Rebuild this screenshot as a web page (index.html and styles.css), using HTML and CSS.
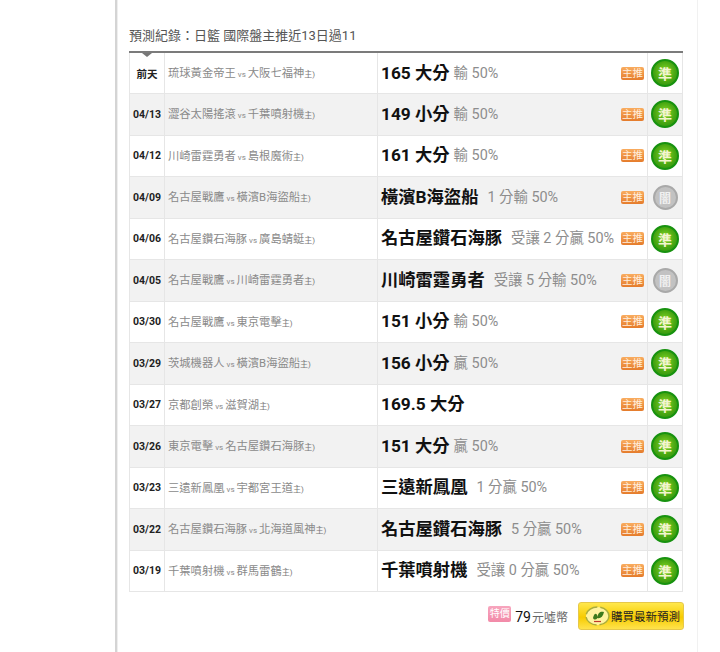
FILE: index.html
```html
<!DOCTYPE html>
<html lang="zh-Hant">
<head>
<meta charset="utf-8">
<title>預測紀錄</title>
<link rel="stylesheet" href="styles.css">
</head>
<body>
<main class="panel">
  <h2 class="title">預測紀錄：日籃 國際盤主推近13日過11</h2>
  <div class="table-wrap">
    <span class="pointer"></span>
    <table class="records">
      <colgroup><col class="c-date"><col class="c-match"><col class="c-pick"><col class="c-res"></colgroup>
      <tbody>
        <tr><td class="date">前天</td><td class="match">琉球黃金帝王<small>vs</small>大阪七福神<small>主)</small></td><td><div class="pick"><b class="num">165 大分</b><span class="odds">輸 50%</span><span class="tag">主推</span></div></td><td class="res"><span class="dot win">準</span></td></tr>
        <tr><td class="date">04/13</td><td class="match">澀谷太陽搖滾<small>vs</small>千葉噴射機<small>主)</small></td><td><div class="pick"><b class="num">149 小分</b><span class="odds">輸 50%</span><span class="tag">主推</span></div></td><td class="res"><span class="dot win">準</span></td></tr>
        <tr><td class="date">04/12</td><td class="match">川崎雷霆勇者<small>vs</small>島根魔術<small>主)</small></td><td><div class="pick"><b class="num">161 大分</b><span class="odds">輸 50%</span><span class="tag">主推</span></div></td><td class="res"><span class="dot win">準</span></td></tr>
        <tr><td class="date">04/09</td><td class="match">名古屋戰鷹<small>vs</small>橫濱B海盜船<small>主)</small></td><td><div class="pick"><b>橫濱B海盜船</b><span class="odds wide">1 分輸 50%</span><span class="tag">主推</span></div></td><td class="res"><span class="dot lose">闇</span></td></tr>
        <tr><td class="date">04/06</td><td class="match">名古屋鑽石海豚<small>vs</small>廣島蜻蜓<small>主)</small></td><td><div class="pick"><b>名古屋鑽石海豚</b><span class="odds wide">受讓 2 分贏 50%</span><span class="tag">主推</span></div></td><td class="res"><span class="dot win">準</span></td></tr>
        <tr><td class="date">04/05</td><td class="match">名古屋戰鷹<small>vs</small>川崎雷霆勇者<small>主)</small></td><td><div class="pick"><b>川崎雷霆勇者</b><span class="odds wide">受讓 5 分輸 50%</span><span class="tag">主推</span></div></td><td class="res"><span class="dot lose">闇</span></td></tr>
        <tr><td class="date">03/30</td><td class="match">名古屋戰鷹<small>vs</small>東京電擊<small>主)</small></td><td><div class="pick"><b class="num">151 小分</b><span class="odds">輸 50%</span><span class="tag">主推</span></div></td><td class="res"><span class="dot win">準</span></td></tr>
        <tr><td class="date">03/29</td><td class="match">茨城機器人<small>vs</small>橫濱B海盜船<small>主)</small></td><td><div class="pick"><b class="num">156 小分</b><span class="odds">贏 50%</span><span class="tag">主推</span></div></td><td class="res"><span class="dot win">準</span></td></tr>
        <tr><td class="date">03/27</td><td class="match">京都創榮<small>vs</small>滋賀湖<small>主)</small></td><td><div class="pick"><b class="num">169.5 大分</b><span class="tag">主推</span></div></td><td class="res"><span class="dot win">準</span></td></tr>
        <tr><td class="date">03/26</td><td class="match">東京電擊<small>vs</small>名古屋鑽石海豚<small>主)</small></td><td><div class="pick"><b class="num">151 大分</b><span class="odds">贏 50%</span><span class="tag">主推</span></div></td><td class="res"><span class="dot win">準</span></td></tr>
        <tr><td class="date">03/23</td><td class="match">三遠新鳳凰<small>vs</small>宇都宮王道<small>主)</small></td><td><div class="pick"><b>三遠新鳳凰</b><span class="odds wide">1 分贏 50%</span><span class="tag">主推</span></div></td><td class="res"><span class="dot win">準</span></td></tr>
        <tr><td class="date">03/22</td><td class="match">名古屋鑽石海豚<small>vs</small>北海道風神<small>主)</small></td><td><div class="pick"><b>名古屋鑽石海豚</b><span class="odds wide">5 分贏 50%</span><span class="tag">主推</span></div></td><td class="res"><span class="dot win">準</span></td></tr>
        <tr><td class="date">03/19</td><td class="match">千葉噴射機<small>vs</small>群馬雷鶴<small>主)</small></td><td><div class="pick"><b>千葉噴射機</b><span class="odds wide">受讓 0 分贏 50%</span><span class="tag">主推</span></div></td><td class="res"><span class="dot win">準</span></td></tr>
      </tbody>
    </table>
  </div>
  <div class="buy">
    <span class="sale">特價</span>
    <span class="price"><strong>79</strong>元噓幣</span>
    <a class="buy-btn" href="#">
      <svg class="seal" width="27" height="22" viewBox="0 0 27 22" aria-hidden="true">
        <ellipse cx="13.5" cy="11" rx="11.5" ry="9" fill="#fff3a0" stroke="#a9ad3c" stroke-width="1.5" stroke-dasharray="14 3"/>
        <path d="M9 13 C10 8 13 7 13.5 12 C14 7 17 6 20 7 C19 12 16 14 13.5 13 C12 15 10 15 9 13Z" fill="#3d7a1c"/>
        <path d="M10 16.5 H17" stroke="#c0392b" stroke-width="1.2"/>
      </svg>
      購買最新預測
    </a>
  </div>
</main>
</body>
</html>
```
FILE: styles.css
```css
html, body {
  margin: 0;
  padding: 0;
  background: #fff;
}
body {
  height: 652px;
  overflow: hidden;
  font-family: Roboto, "Noto Sans CJK TC", sans-serif;
  color: #111;
}
.panel {
  box-sizing: border-box;
  margin-left: 115px;
  width: 583px;
  height: 652px;
  padding: 28px 14px 0 12px;
  border-left: 2px solid #d4d4d4;
  border-right: 1px solid #f1f1f1;
  box-shadow: inset 1px 0 0 #eee;
}
.title {
  margin: 0 0 8px;
  height: 15px;
  line-height: 15px;
  font-size: 13px;
  font-weight: 400;
  color: #555;
  white-space: nowrap;
}
.table-wrap {
  position: relative;
  width: 553px;
}
.pointer {
  position: absolute;
  left: 13px;
  top: 2px;
  width: 0;
  height: 0;
  border-left: 5px solid transparent;
  border-right: 5px solid transparent;
  border-top: 4px solid #777;
}
.records {
  width: 553px;
  table-layout: fixed;
  border-collapse: collapse;
  border-top: 2px solid #7b7b7b;
}
.c-date { width: 35px; }
.c-match { width: 213px; }
.c-pick { width: 270px; }
.c-res { width: 35px; }
.records td {
  height: 41.5px;
  box-sizing: border-box;
  padding: 0;
  border: 1px solid #e6e6e6;
  vertical-align: middle;
}
.records tr:first-child td { border-top: 0; }
.records tr:nth-child(even) td { background: #f2f2f2; }
.date {
  text-align: center;
  font-size: 10.5px;
  font-weight: 700;
  color: #222;
  white-space: nowrap;
}
.records td.match {
  padding: 0 0 2px 3px;
  font-size: 11.3px;
  color: #8a8a8a;
  white-space: nowrap;
}
.match small { font-size: 8px; margin: 0 2px; }
.match small:last-child { margin: 0; color: #777; }
.pick {
  display: flex;
  align-items: center;
  padding: 0 3px 4px;
  white-space: nowrap;
}
.pick b {
  font-size: 17.3px;
  font-weight: 700;
  color: #111;
}
.odds {
  margin-left: 4px;
  font-size: 14.4px;
  color: #8d8d8d;
}
.odds.wide { margin-left: 9px; }
.tag {
  margin-left: auto;
  margin-top: 4px;
  box-sizing: border-box;
  width: 23px;
  height: 13px;
  line-height: 13px;
  text-align: center;
  font-size: 10.5px;
  color: #ffeedd;
  background: linear-gradient(#f9ac5f, #e57c2c);
  border-radius: 2px;
}
.res { text-align: center; }
.dot {
  display: inline-flex;
  align-items: center;
  justify-content: center;
  box-sizing: border-box;
  width: 28px;
  height: 28px;
  border-radius: 50%;
  font-size: 14px;
  font-weight: 700;
  color: #f4f4d0;
  vertical-align: middle;
}
.dot.win {
  background: radial-gradient(circle at 50% 45%, #8ddb2a 0, #4aa812 55%, #1e8a10 100%);
  border: 2px solid #17920f;
}
.dot.lose {
  width: 25px;
  height: 25px;
  font-size: 12px;
  background: #c2c2c2;
  border: 2px solid #a9a9a9;
  color: #f1f1f1;
}
.buy {
  display: flex;
  align-items: center;
  justify-content: flex-end;
  width: 555px;
  margin-top: 10px;
}
.sale {
  width: 23px;
  height: 16px;
  line-height: 16px;
  margin-top: -4px;
  text-align: center;
  font-size: 10px;
  color: #fff;
  background: linear-gradient(#f7a5bd, #f28aa8);
  border-radius: 2px;
}
.price {
  margin-left: 4px;
  font-size: 12px;
  color: #666;
}
.price strong {
  margin-right: 1px;
  font-size: 14px;
  font-weight: 400;
  color: #111;
}
.buy-btn {
  display: flex;
  align-items: center;
  box-sizing: border-box;
  width: 106px;
  height: 28px;
  margin-left: 10px;
  padding-left: 5px;
  font-size: 11.5px;
  color: #222;
  text-decoration: none;
  white-space: nowrap;
  background: linear-gradient(#ffe84d, #f7cb00 55%, #ffe34d);
  border: 1px solid #e6c84a;
  border-radius: 3px;
}
.seal { flex: none; }
```
